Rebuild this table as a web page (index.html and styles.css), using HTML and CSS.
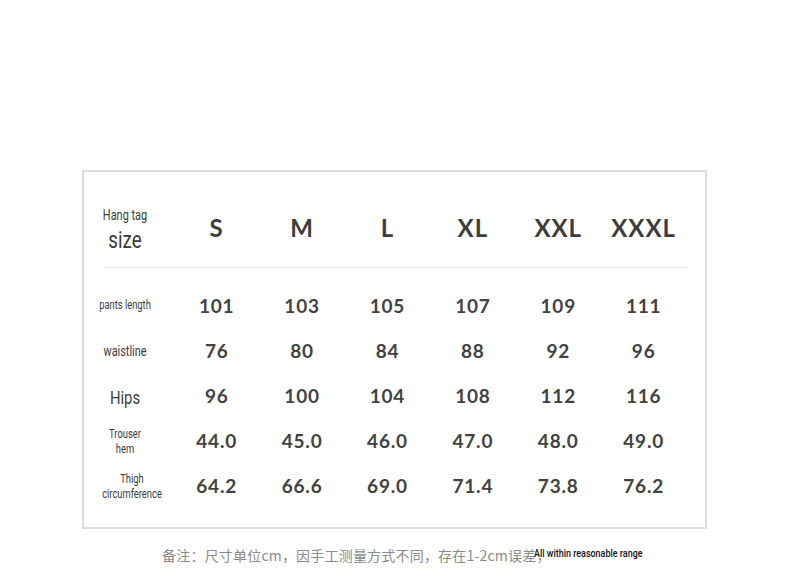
FILE: index.html
```html
<!DOCTYPE html>
<html>
<head>
<meta charset="utf-8">
<link rel="stylesheet" href="styles.css">
</head>
<body>
<div class="page">
  <div class="chart">
    <div class="row head">
      <div class="label hang"><span class="tag">Hang tag</span><span class="sz">size</span></div>
      <div class="size">S</div>
      <div class="size">M</div>
      <div class="size">L</div>
      <div class="size">XL</div>
      <div class="size">XXL</div>
      <div class="size">XXXL</div>
    </div>
    <div class="rule"></div>
    <div class="row">
      <div class="label small">pants length</div>
      <div class="num">101</div><div class="num">103</div><div class="num">105</div><div class="num">107</div><div class="num">109</div><div class="num">111</div>
    </div>
    <div class="row">
      <div class="label mid">waistline</div>
      <div class="num">76</div><div class="num">80</div><div class="num">84</div><div class="num">88</div><div class="num">92</div><div class="num">96</div>
    </div>
    <div class="row">
      <div class="label big">Hips</div>
      <div class="num">96</div><div class="num">100</div><div class="num">104</div><div class="num">108</div><div class="num">112</div><div class="num">116</div>
    </div>
    <div class="row">
      <div class="label small two">Trouser<br>hem</div>
      <div class="num">44.0</div><div class="num">45.0</div><div class="num">46.0</div><div class="num">47.0</div><div class="num">48.0</div><div class="num">49.0</div>
    </div>
    <div class="row">
      <div class="label small two thigh">Thigh<br>circumference</div>
      <div class="num">64.2</div><div class="num">66.6</div><div class="num">69.0</div><div class="num">71.4</div><div class="num">73.8</div><div class="num">76.2</div>
    </div>
  </div>
  <p class="note">备注：尺寸单位cm，因手工测量方式不同，存在1-2cm误差，<span class="range">All within reasonable range</span></p>
</div>
</body>
</html>
```
FILE: styles.css
```css
html, body {
  margin: 0;
  padding: 0;
  background: #ffffff;
}
.page {
  width: 790px;
  height: 568px;
  padding-top: 170px;
  box-sizing: border-box;
  overflow: hidden;
}
.chart {
  margin-left: 82px;
  width: 625px;
  height: 359px;
  box-sizing: border-box;
  border: 2px solid #dcdcdc;
  padding-top: 15px;
}
.row {
  display: grid;
  grid-template-columns: 90px repeat(6, 85.4px);
  height: 45px;
  align-items: center;
}
.row.head {
  height: 80px;
}
.rule {
  height: 1px;
  background: #e3e3e3;
  margin: 0 18px 15px 20px;
}
.label {
  padding-right: 8px;
  text-align: center;
  color: #3a3a3a;
  font-family: "Roboto", sans-serif;
  transform: scaleX(0.78);
  transform-origin: 41px 50%;
}
.label.thigh {
  padding-right: 0;
  padding-left: 6px;
  transform-origin: 48px 50%;
}
.hang {
  display: flex;
  flex-direction: column;
  align-items: center;
  padding-top: 6px;
}
.tag {
  font-size: 14px;
  line-height: 16px;
}
.sz {
  font-size: 24px;
  line-height: 28px;
  margin-top: 3px;
}
.small {
  font-size: 12px;
  line-height: 15px;
}
.mid {
  font-size: 14px;
}
.big {
  font-size: 19px;
  padding-top: 3px;
}
.two {
  padding-top: 2px;
}
.size {
  text-align: center;
  font-family: "Lato", "Open Sans", sans-serif;
  font-weight: 700;
  font-size: 24px;
  color: #3d3d3d;
  letter-spacing: 1px;
}
.num {
  text-align: center;
  font-family: "Lato", "Open Sans", sans-serif;
  font-weight: 700;
  font-size: 19px;
  color: #424242;
  letter-spacing: 0.8px;
}
.note {
  margin: 14px 0 0 162px;
  font-family: "Noto Sans CJK SC", "Noto Sans", sans-serif;
  font-size: 14px;
  line-height: 20px;
  color: #8a8a8a;
  white-space: nowrap;
  letter-spacing: 0.2px;
}
.range {
  display: inline-block;
  margin-left: -17px;
  vertical-align: 4px;
  font-family: "Roboto", sans-serif;
  font-size: 11.5px;
  font-weight: 500;
  letter-spacing: 0;
  color: #111111;
  transform: scaleX(0.78);
  transform-origin: 0 50%;
}
```
